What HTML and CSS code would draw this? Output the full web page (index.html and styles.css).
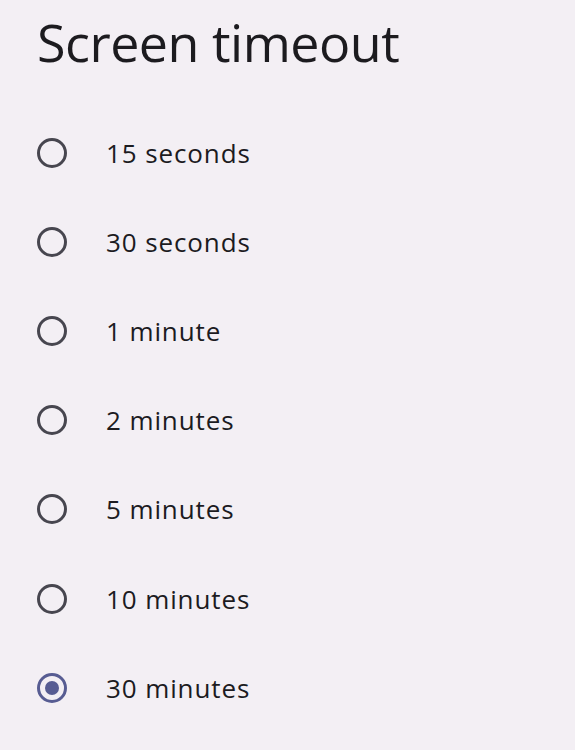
FILE: index.html
```html
<!DOCTYPE html>
<html lang="en">
<head>
<meta charset="utf-8">
<link rel="stylesheet" href="styles.css">
</head>
<body>
<main class="dialog">
  <h1 class="title">Screen timeout</h1>
  <ul class="options">
    <li class="option"><span class="radio"></span><span class="label">15 seconds</span></li>
    <li class="option"><span class="radio"></span><span class="label">30 seconds</span></li>
    <li class="option"><span class="radio"></span><span class="label">1 minute</span></li>
    <li class="option"><span class="radio"></span><span class="label">2 minutes</span></li>
    <li class="option"><span class="radio"></span><span class="label">5 minutes</span></li>
    <li class="option"><span class="radio"></span><span class="label">10 minutes</span></li>
    <li class="option"><span class="radio radio-checked"></span><span class="label">30 minutes</span></li>
  </ul>
</main>
</body>
</html>
```
FILE: styles.css
```css
html, body {
  margin: 0;
  padding: 0;
  background: #f3eff4;
}
body {
  font-family: "Open Sans", "Noto Sans", sans-serif;
  color: #1c1b1f;
  width: 575px;
  height: 750px;
  overflow: hidden;
}
.dialog {
  padding: 0 0 0 37px;
}
.title {
  margin: 0;
  padding-top: 6px;
  font-size: 52px;
  font-weight: 400;
  line-height: 72px;
  letter-spacing: -0.5px;
}
.options {
  list-style: none;
  margin: 0;
  padding: 30px 0 0 0;
}
.option {
  display: flex;
  align-items: center;
  height: 89.2px;
}
.radio {
  box-sizing: border-box;
  width: 30px;
  height: 30px;
  border: 3px solid #47464f;
  border-radius: 50%;
  display: flex;
  align-items: center;
  justify-content: center;
  flex: none;
}
.radio-checked {
  border-color: #575c92;
}
.radio-checked::after {
  content: "";
  width: 14px;
  height: 14px;
  border-radius: 50%;
  background: #575c92;
}
.label {
  margin-left: 39px;
  font-size: 26px;
  line-height: 32px;
  letter-spacing: 0.9px;
}
```
